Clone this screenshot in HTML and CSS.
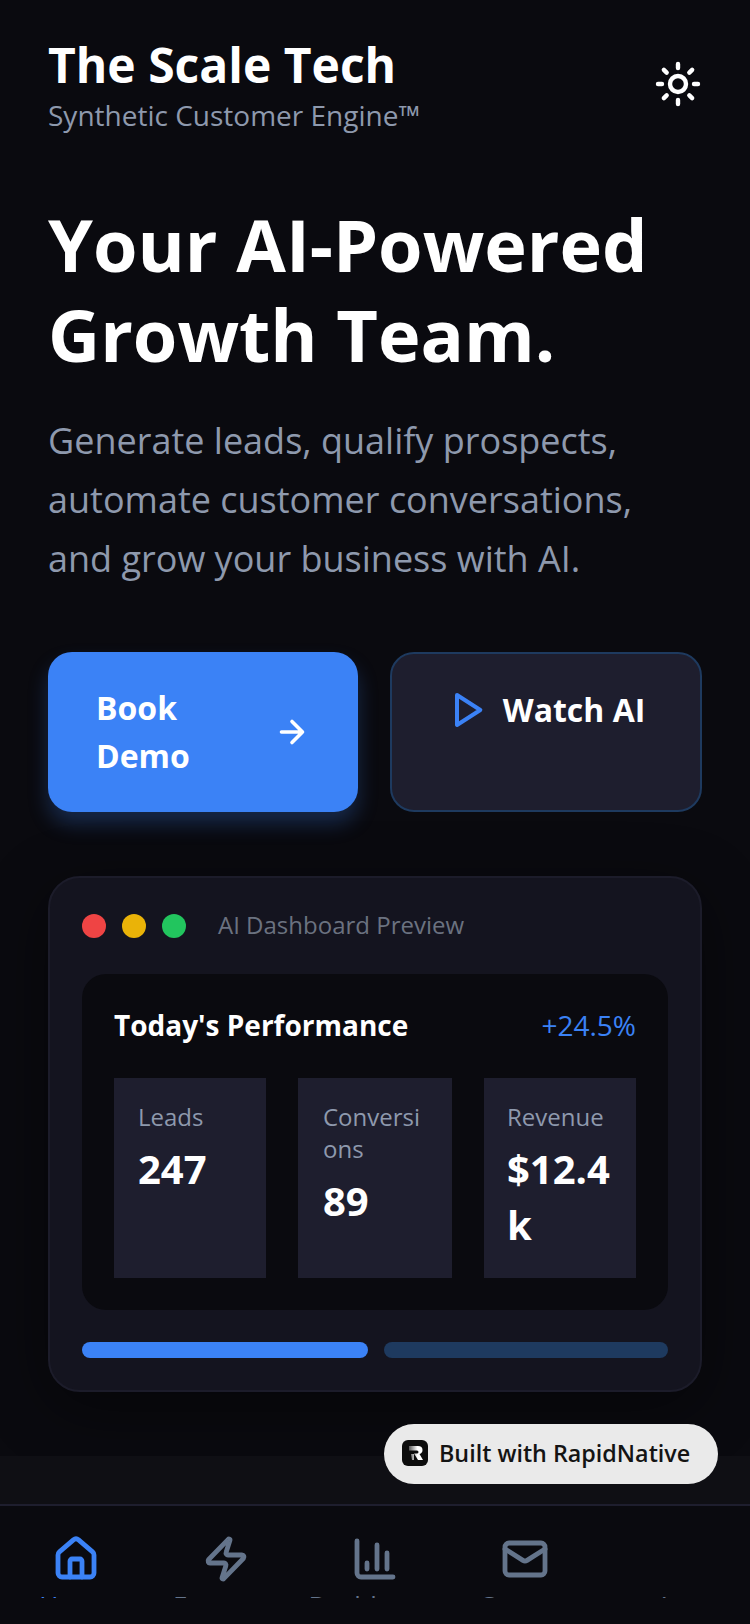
FILE: index.html
```html
<!DOCTYPE html>
<html lang="en">
<head>
<meta charset="utf-8">
<title>The Scale Tech</title>
<link rel="stylesheet" href="styles.css">
</head>
<body>
<div class="app">
  <main class="scroll">
    <header class="header">
      <div>
        <h1 class="brand">The Scale Tech</h1>
        <p class="tagline">Synthetic Customer Engine™</p>
      </div>
      <svg class="icon-48 sun" viewBox="0 0 24 24"><circle cx="12" cy="12" r="4"/><path d="M12 2v2M12 20v2M4.93 4.930l1.410 1.410M17.660 17.660l1.410 1.410M2 12h2M20 12h2M6.340 17.660l-1.410 1.410M19.070 4.930l-1.410 1.410"/></svg>
    </header>
    <h2 class="hero">Your AI-Powered Growth Team.</h2>
    <p class="lead">Generate leads, qualify prospects, automate customer conversations, and grow your business with AI.</p>
    <div class="actions">
      <a class="btn btn-primary">
        <span>Book Demo</span>
        <svg class="icon-36 arrow" viewBox="0 0 24 24"><path d="M5 12h14M12 5l7 7-7 7"/></svg>
      </a>
      <a class="btn btn-secondary">
        <svg class="icon-40 play" viewBox="0 0 24 24"><polygon points="6 3 20 12 6 21 6 3"/></svg>
        <span>Watch AI</span>
      </a>
    </div>
    <section class="card">
      <div class="window-bar">
        <i class="dot dot-red"></i><i class="dot dot-yellow"></i><i class="dot dot-green"></i>
        <span class="window-title">AI Dashboard Preview</span>
      </div>
      <div class="panel">
        <div class="panel-head">
          <span class="panel-title">Today's Performance</span>
          <span class="panel-delta">+24.5%</span>
        </div>
        <div class="stats">
          <div class="stat"><div class="stat-label">Leads</div><div class="stat-value">247</div></div>
          <div class="stat stat-mid"><div class="stat-label">Conversions</div><div class="stat-value">89</div></div>
          <div class="stat stat-last"><div class="stat-label">Revenue</div><div class="stat-value">$12.4k</div></div>
        </div>
      </div>
      <div class="bars"><div class="bar bar-on"></div><div class="bar bar-off"></div></div>
    </section>
  </main>
  <div class="band"></div>
  <nav class="tabbar">
    <div class="tab tab-active">
      <svg class="icon-48" viewBox="0 0 24 24"><path d="M15 21v-8a1 1 0 0 0-1-1h-4a1 1 0 0 0-1 1v8"/><path d="M3 10a2 2 0 0 1 .709-1.528l7-5.999a2 2 0 0 1 2.582 0l7 5.999A2 2 0 0 1 21 10v9a2 2 0 0 1-2 2H5a2 2 0 0 1-2-2z"/></svg>
      <span class="tab-label">Home</span>
    </div>
    <div class="tab">
      <svg class="icon-48" viewBox="0 0 24 24"><path d="M4 14a1 1 0 0 1-.78-1.63l9.9-10.2a.5.5 0 0 1 .86.46l-1.92 6.02A1 1 0 0 0 13 10h7a1 1 0 0 1 .78 1.63l-9.9 10.2a.5.5 0 0 1-.86-.46l1.92-6.02A1 1 0 0 0 11 14z"/></svg>
      <span class="tab-label">Features</span>
    </div>
    <div class="tab">
      <svg class="icon-48" viewBox="0 0 24 24"><path d="M3 3v16a2 2 0 0 0 2 2h16M18 17V9M13 17V5M8 17v-3"/></svg>
      <span class="tab-label">Dashboard</span>
    </div>
    <div class="tab">
      <svg class="icon-48" viewBox="0 0 24 24"><rect x="2" y="4" width="20" height="16" rx="2"/><path d="M22 7l-8.97 5.7a1.94 1.94 0 0 1-2.06 0L2 7"/></svg>
      <span class="tab-label">Contact</span>
    </div>
    <div class="tab">
      <span class="icon-48"></span>
      <span class="tab-label">Act</span>
    </div>
  </nav>
  <div class="badge">
    <svg class="badge-logo" viewBox="0 0 26 26"><defs><linearGradient id="rn" x1="0" y1="0" x2="1" y2="0"><stop offset="0" stop-color="#555"/><stop offset=".6" stop-color="#fff"/></linearGradient></defs><rect width="26" height="26" rx="6" fill="#0c0c0c"/><path d="M7 6h9q4.500 0 4.500 4 0 3-3 4l3.500 6h-5l-4-6.500h3q1.500 0 1.500-1.500t-1.500-1.500H7z M9 14l3 0v6h-2z" fill="url(#rn)"/></svg>
    <span>Built with RapidNative</span>
  </div>
</div>
</body>
</html>
```
FILE: styles.css
```css
* { box-sizing: border-box; margin: 0; padding: 0; }
html, body { width: 750px; height: 1624px; overflow: hidden; background: #0a0a0f; }
body { font-family: "Open Sans", "Liberation Sans", sans-serif; color: #fff; }

.app { position: relative; width: 750px; height: 1624px; display: flex; flex-direction: column; background: #0f0f14; overflow: hidden; }
.scroll { height: 1456px; flex: none; overflow: hidden; padding: 32px 48px 0; background: #0a0a0f; }
.band { flex: 1; }

.icon-48 { width: 48px; height: 48px; flex: none; display: block; }
.icon-40 { width: 40px; height: 40px; flex: none; display: block; }
.icon-36 { width: 36px; height: 36px; flex: none; display: block; }
svg.icon-48, svg.icon-40, svg.icon-36 { fill: none; stroke: currentColor; stroke-width: 2.4; stroke-linecap: round; stroke-linejoin: round; }

.header { display: flex; justify-content: space-between; align-items: center; }
.brand { font-size: 48px; font-weight: 700; line-height: 65px; }
.tagline { font-size: 28px; line-height: 36px; margin-bottom: 2px; color: #8e99ad; }
.sun { color: #fff; }
svg.sun { stroke-width: 2.2; }

.hero { margin-top: 64px; font-size: 72px; font-weight: 700; line-height: 90px; }
.lead { margin-top: 32px; font-size: 36px; line-height: 59px; color: #8e99ad; }

.actions { display: grid; grid-template-columns: 310fr 312fr; gap: 32px; margin-top: 64px; }
.btn { display: flex; border-radius: 24px; padding: 32px 48px; font-size: 32px; font-weight: 700; line-height: 48px; color: #fff; gap: 16px; }
.btn-primary { background: #3b82f6; align-items: center; justify-content: space-between; box-shadow: 0 12px 20px rgba(59, 130, 246, .25); }
.btn-secondary { background: #1e1e2e; border: 2px solid #1e3a5f; justify-content: center; align-items: flex-start; padding-left: 32px; padding-right: 32px; }
.btn-secondary .play { margin-top: 4px; color: #3b82f6; }

.card { margin-top: 64px; padding: 32px; background: #14141f; border: 2px solid #1c1c2a; border-radius: 32px; box-shadow: 0 16px 64px rgba(0, 0, 0, .45); }
.window-bar { display: flex; align-items: center; gap: 16px; height: 32px; }
.dot { width: 24px; height: 24px; border-radius: 50%; }
.dot-red { background: #ef4444; }
.dot-yellow { background: #eab308; }
.dot-green { background: #22c55e; }
.window-title { margin-left: 16px; font-size: 24px; line-height: 30px; align-self: flex-start; color: #6b7280; }

.panel { margin-top: 32px; padding: 32px; background: #0a0a0f; border-radius: 24px; }
.panel-head { display: flex; justify-content: space-between; align-items: center; height: 38px; }
.panel-title { font-size: 28px; font-weight: 700; }
.panel-delta { font-size: 28px; color: #3b82f6; }
.stats { display: grid; grid-template-columns: 152fr 154fr 152fr; gap: 32px; margin-top: 34px; }
.stat { background: #1e1e2e; padding: 23px 24px 25px; word-break: break-all; }
.stat-mid { padding-left: 25px; }
.stat-last { padding-left: 23px; }
.stat-label { font-size: 24px; line-height: 32px; color: #8e99ad; }
.stat-value { margin-top: 8px; font-size: 40px; font-weight: 700; line-height: 56px; }

.bars { display: flex; gap: 16px; margin-top: 32px; }
.bar { height: 16px; border-radius: 8px; }
.bar-on { flex: 286 1 0; background: #3b82f6; }
.bar-off { flex: 284 1 0; background: #1e3a5f; }

.tabbar { flex: none; height: 120px; display: flex; padding: 29px 0 0 1px; background: #0a0a0f; border-top: 2px solid #1e1e2e; overflow: hidden; }
.tab { flex: 1 1 0; min-width: 0; height: 63px; padding: 0 8px; overflow: hidden; display: flex; flex-direction: column; align-items: center; color: #64748b; }
.tab-active { color: #3b82f6; }
.tab-label { margin-top: 4px; font-size: 26px; word-break: break-all; }

.badge { position: absolute; left: 384px; top: 1424px; width: 334px; height: 60px; border-radius: 30px; background: #eaeaea; display: flex; align-items: center; gap: 11px; padding: 0 0 2px 18px; color: #141414; font-size: 23.3px; font-weight: 600; }
.badge-logo { width: 26px; height: 26px; flex: none; }
```
